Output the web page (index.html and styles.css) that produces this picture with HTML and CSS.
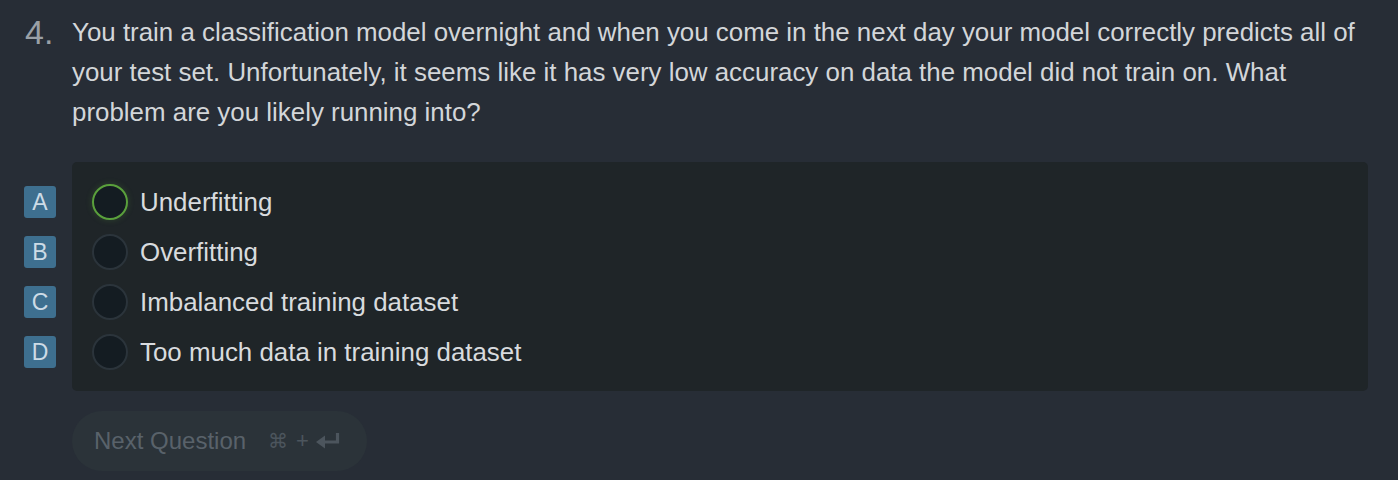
FILE: index.html
```html
<!DOCTYPE html>
<html>
<head>
<meta charset="utf-8">
<link rel="stylesheet" href="styles.css">
</head>
<body>
<div class="quiz">
  <div class="question">
    <div class="num">4.</div>
    <div class="qtext">You train a classification model overnight and when you come in the next day your model correctly predicts all of your test set. Unfortunately, it seems like it has very low accuracy on data the model did not train on. What problem are you likely running into?</div>
  </div>
  <div class="answers">
    <div class="keys">
      <div class="key">A</div>
      <div class="key">B</div>
      <div class="key">C</div>
      <div class="key">D</div>
    </div>
    <div class="panel">
      <div class="opt"><span class="radio selected"></span><span class="label">Underfitting</span></div>
      <div class="opt"><span class="radio"></span><span class="label">Overfitting</span></div>
      <div class="opt"><span class="radio"></span><span class="label">Imbalanced training dataset</span></div>
      <div class="opt"><span class="radio"></span><span class="label">Too much data in training dataset</span></div>
    </div>
  </div>
  <div class="actions">
    <button class="next">Next Question
      <span class="shortcut"><span class="cmd">⌘</span><span class="plus">+</span><svg class="enter" width="26" height="20" viewBox="0 0 26 20"><path d="M22.5 2 V11 H9" fill="none" stroke="currentColor" stroke-width="3.2"/><path d="M1 11 L10 4.5 V17.5 Z" fill="currentColor"/></svg></span>
    </button>
  </div>
</div>
</body>
</html>
```
FILE: styles.css
```css
html, body {
  margin: 0;
  padding: 0;
  background: #272d36;
  height: 100%;
}
body {
  font-family: "Liberation Sans", Arial, sans-serif;
  color: #d3d6d9;
  overflow: hidden;
}
.quiz {
  padding: 12px 30px 0 24px;
}
.question {
  display: flex;
  align-items: flex-start;
}
.num {
  width: 48px;
  flex: none;
  font-size: 34px;
  line-height: 40px;
  color: #9aa0a6;
  padding-left: 1px;
  box-sizing: border-box;
}
.qtext {
  font-size: 25.9px;
  line-height: 40px;
  color: #d3d6d9;
}
.answers {
  display: flex;
  margin-top: 30px;
}
.keys {
  width: 48px;
  flex: none;
  display: flex;
  flex-direction: column;
  padding-top: 24px;
}
.key {
  width: 32px;
  height: 32px;
  margin: 0 0 18px 0;
  background: #3e6f8f;
  border-radius: 3px;
  color: #cddbe6;
  font-size: 23px;
  line-height: 32px;
  text-align: center;
}
.panel {
  flex: 1;
  background: #1f2528;
  border-radius: 5px;
  padding: 15px 20px 14px 20px;
}
.opt {
  display: flex;
  align-items: center;
  height: 50px;
}
.radio {
  width: 32px;
  height: 32px;
  border-radius: 50%;
  border: 2px solid #2b343b;
  background: #141c22;
  flex: none;
  margin-right: 12px;
}
.radio.selected {
  border-color: #5aa03c;
  box-shadow: 0 0 6px rgba(90, 160, 60, 0.25);
}
.label {
  font-size: 25.9px;
  color: #d8dbde;
}
.actions {
  margin: 20px 0 0 48px;
}
.next {
  display: inline-flex;
  align-items: center;
  height: 60px;
  padding: 0 26px 0 22px;
  border: none;
  border-radius: 30px;
  background: #2b3339;
  color: #59626a;
  font-family: "Liberation Sans", Arial, sans-serif;
  font-size: 24px;
}
.shortcut {
  display: inline-flex;
  align-items: center;
  margin-left: 22px;
  color: #4c555d;
  font-size: 22px;
}
.cmd {
  font-family: "DejaVu Sans", sans-serif;
  font-size: 20px;
}
.plus {
  margin: 0 6px 0 8px;
}
.enter {
  display: block;
}
```
